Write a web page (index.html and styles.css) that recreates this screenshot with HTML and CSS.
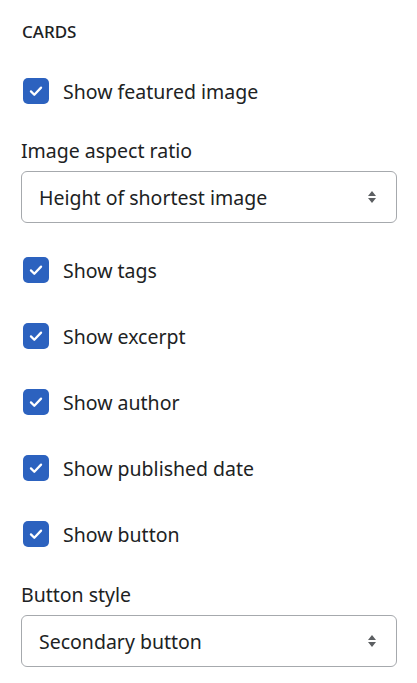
FILE: index.html
```html
<!DOCTYPE html>
<html lang="en">
<head>
  <meta charset="UTF-8" />
  <title>Cards settings</title>
  <link rel="stylesheet" href="styles.css">
</head>
<body>
  <div class="panel">
    <div class="section-title">CARDS</div>

    <label class="check-row">
      <span class="box"><svg viewBox="0 0 16 16" width="18" height="18"><path d="M3.5 8.3l3 3 6-6.3" fill="none" stroke="#fff" stroke-width="2" stroke-linecap="round" stroke-linejoin="round"/></svg></span>
      <span>Show featured image</span>
    </label>

    <div class="field">
      <div class="field-label">Image aspect ratio</div>
      <div class="select">
        <span>Height of shortest image</span>
        <svg class="arrows" viewBox="0 0 10 16" width="10" height="16"><path d="M5 2L9 7H1z M5 14L1 9h8z" fill="#5c5f62"/></svg>
      </div>
    </div>

    <label class="check-row">
      <span class="box"><svg viewBox="0 0 16 16" width="18" height="18"><path d="M3.5 8.3l3 3 6-6.3" fill="none" stroke="#fff" stroke-width="2" stroke-linecap="round" stroke-linejoin="round"/></svg></span>
      <span>Show tags</span>
    </label>
    <label class="check-row">
      <span class="box"><svg viewBox="0 0 16 16" width="18" height="18"><path d="M3.5 8.3l3 3 6-6.3" fill="none" stroke="#fff" stroke-width="2" stroke-linecap="round" stroke-linejoin="round"/></svg></span>
      <span>Show excerpt</span>
    </label>
    <label class="check-row">
      <span class="box"><svg viewBox="0 0 16 16" width="18" height="18"><path d="M3.5 8.3l3 3 6-6.3" fill="none" stroke="#fff" stroke-width="2" stroke-linecap="round" stroke-linejoin="round"/></svg></span>
      <span>Show author</span>
    </label>
    <label class="check-row">
      <span class="box"><svg viewBox="0 0 16 16" width="18" height="18"><path d="M3.5 8.3l3 3 6-6.3" fill="none" stroke="#fff" stroke-width="2" stroke-linecap="round" stroke-linejoin="round"/></svg></span>
      <span>Show published date</span>
    </label>
    <label class="check-row last">
      <span class="box"><svg viewBox="0 0 16 16" width="18" height="18"><path d="M3.5 8.3l3 3 6-6.3" fill="none" stroke="#fff" stroke-width="2" stroke-linecap="round" stroke-linejoin="round"/></svg></span>
      <span>Show button</span>
    </label>

    <div class="field">
      <div class="field-label">Button style</div>
      <div class="select">
        <span>Secondary button</span>
        <svg class="arrows" viewBox="0 0 10 16" width="10" height="16"><path d="M5 2L9 7H1z M5 14L1 9h8z" fill="#5c5f62"/></svg>
      </div>
    </div>
  </div>
</body>
</html>
```

FILE: styles.css
```css
body {
  margin: 0;
  background: #fff;
  font-family: "Noto Sans", "Open Sans", sans-serif;
  color: #202223;
}
.panel {
  padding: 20px 20px 0 21px;
}
.section-title {
  font-size: 17px;
  font-weight: 500;
  line-height: 24px;
  margin-left: 1px;
}
.check-row {
  display: flex;
  align-items: center;
  gap: 14px;
  height: 26px;
  margin: 40px 0 40px 2px;
  font-size: 19.5px;
}
.section-title + .check-row {
  margin-top: 34px;
  margin-bottom: 34px;
}
.check-row.last {
  margin-bottom: 35px;
}
.box {
  width: 26px;
  height: 26px;
  border-radius: 5px;
  background: #2c62bf;
  display: flex;
  align-items: center;
  justify-content: center;
}
.field-label {
  font-size: 19.5px;
  line-height: 26px;
  margin-bottom: 7px;
}
.select {
  display: flex;
  align-items: center;
  justify-content: space-between;
  height: 50px;
  border: 1px solid #a6a9ad;
  border-radius: 6px;
  padding: 0 19px 0 17px;
  font-size: 19.5px;
}
.arrows {
  display: block;
}
.field + .check-row {
  margin-top: 34px;
}
```
